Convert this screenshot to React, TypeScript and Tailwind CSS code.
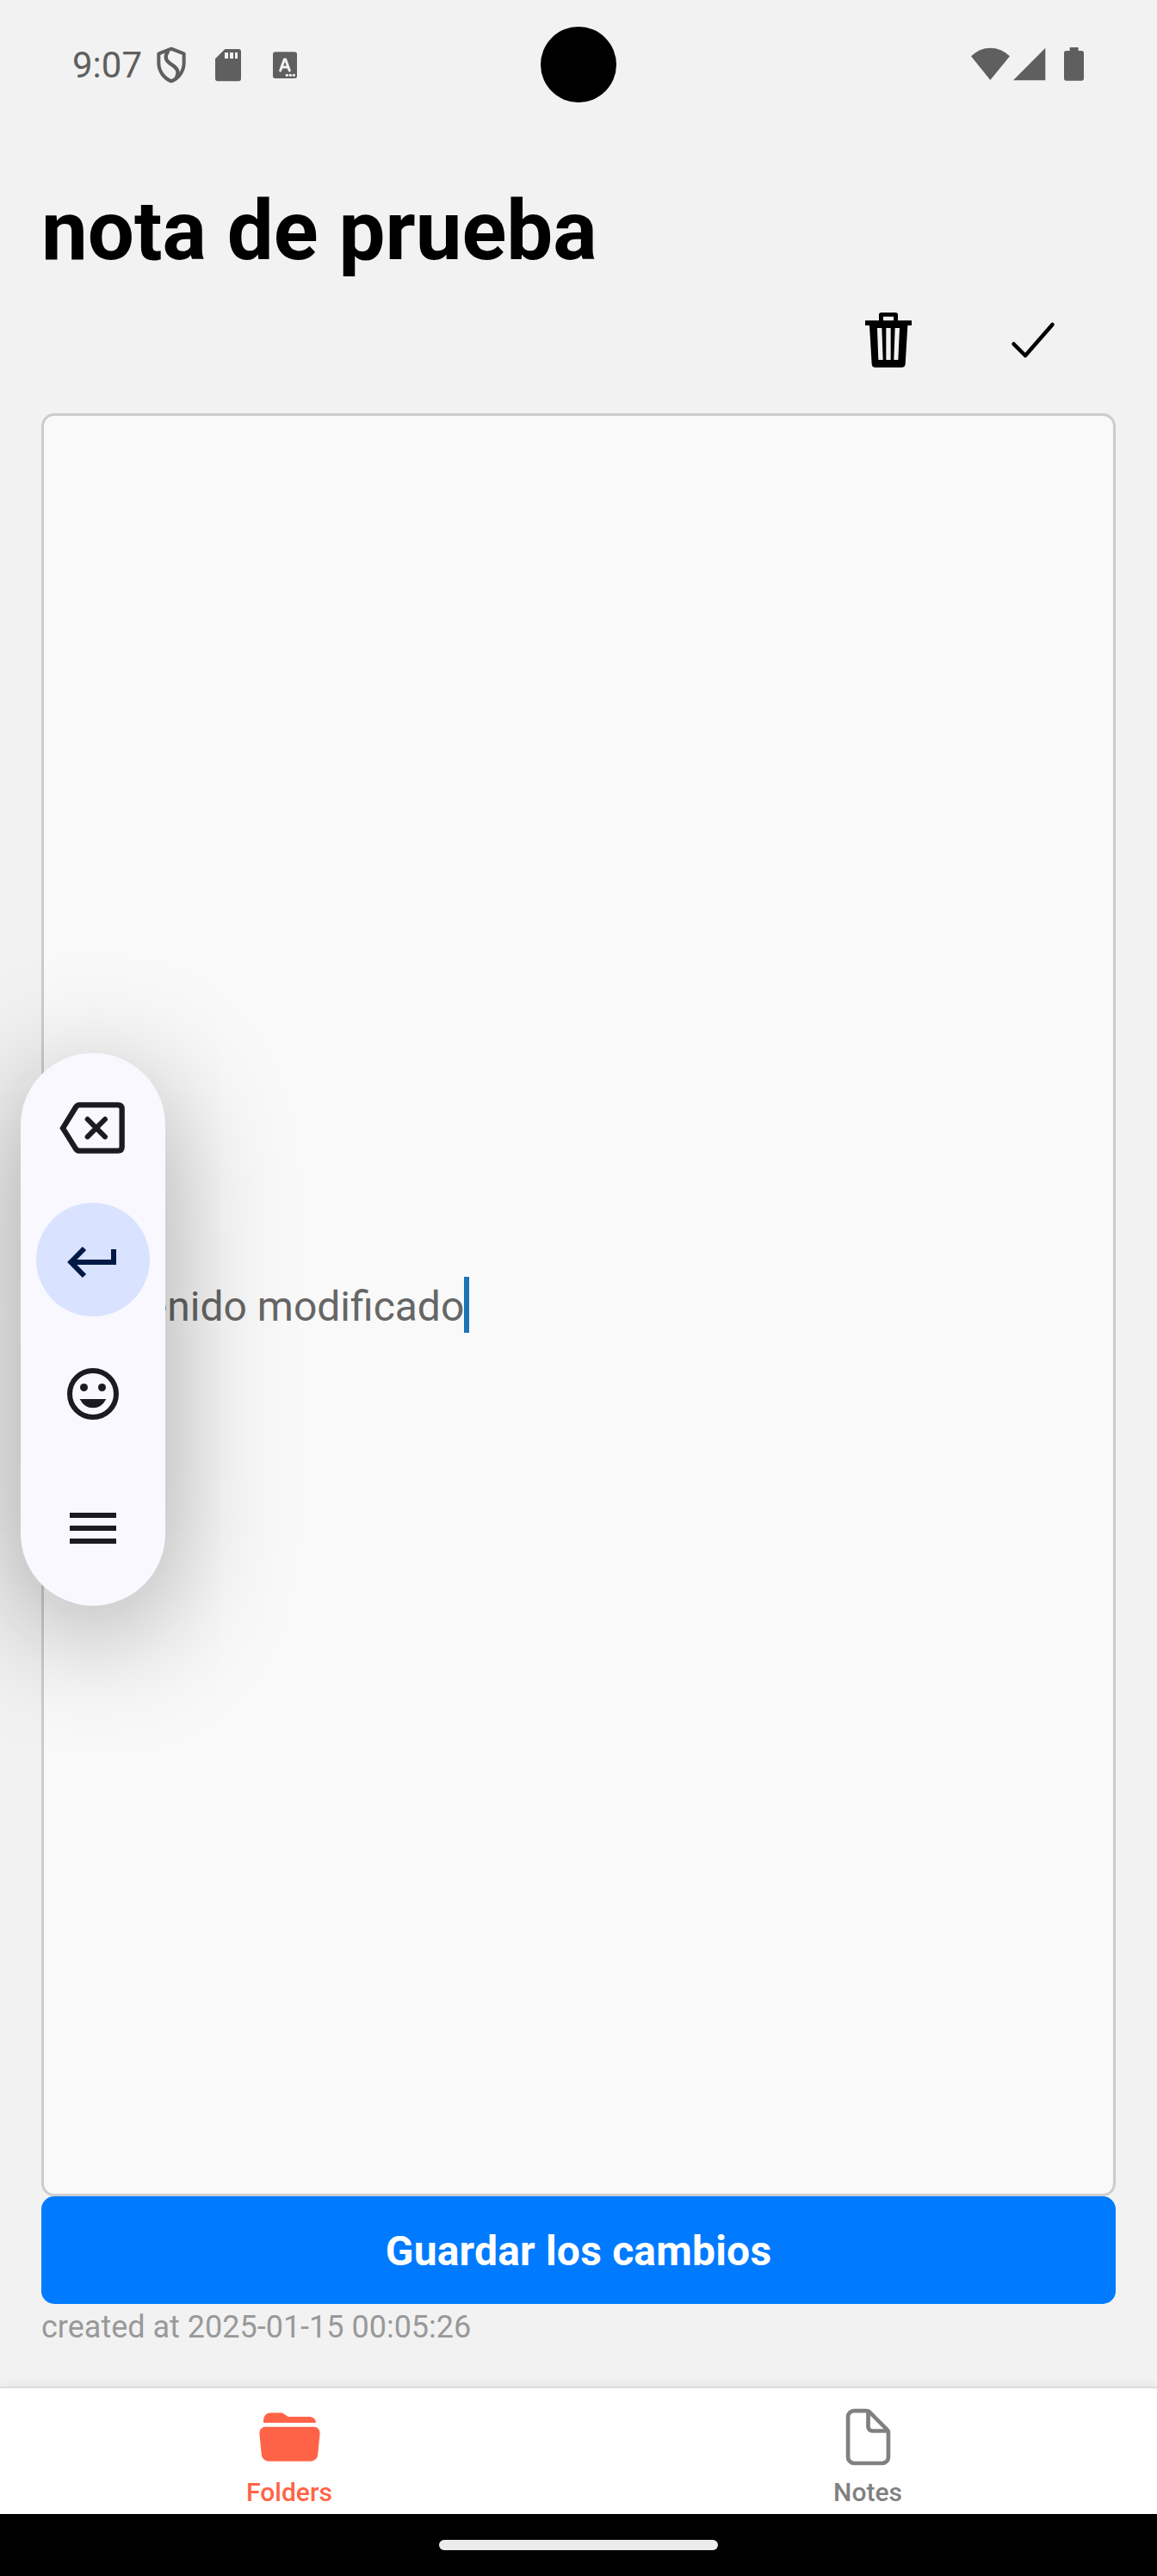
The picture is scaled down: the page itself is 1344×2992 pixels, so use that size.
import { IoCheckmarkOutline, IoDocumentOutline, IoFolderOpen } from "react-icons/io5";

function StatusBar() {
  return (
    <header className="relative flex h-[150px] shrink-0 items-center justify-between pl-[84px] text-[#5f5f5f]">
      <div className="flex items-center">
        <span className="w-[96px] pt-[2px] text-[42px] leading-[48px]">9:07</span>
        <svg className="h-[48px] w-[174px]" viewBox="360 93 522 144">
          <path
            d="M417 110 L461 127 V158 C461 188 443 213 417 223 C391 213 373 188 373 158 V127 Z"
            fill="none"
            stroke="currentColor"
            strokeWidth="12"
            strokeLinejoin="round"
          />
          <path
            d="M407 116 C390 140 400 153 415 163 C438 177 446 190 434 211"
            fill="none"
            stroke="currentColor"
            strokeWidth="13"
          />
          <path
            fill="currentColor"
            fillRule="evenodd"
            d="M604 111 H651 Q660 111 660 120 V214 Q660 223 651 223 H579 Q570 223 570 214 V145 Z M603 123 V144 H615 V123 Z M621 123 V144 H633 V123 Z M639 123 V144 H648 V123 Z"
          />
          <rect x="771" y="121" width="84" height="92" rx="8" fill="currentColor" />
          <path
            d="M797 186 L811 147 H815 L829 186 M803 174 H823"
            fill="none"
            stroke="#f2f2f2"
            strokeWidth="9"
            strokeLinecap="round"
            strokeLinejoin="round"
          />
          <g fill="#f2f2f2">
            <circle cx="820" cy="202" r="5" />
            <circle cx="832" cy="202" r="5" />
            <circle cx="844" cy="202" r="5" />
          </g>
        </svg>
      </div>
      <div className="absolute top-[31px] left-[628px] h-[88px] w-[88px] rounded-full bg-black" />
      <svg className="mr-[81px] h-[48px] w-[138px]" viewBox="78 93 414 144" fill="currentColor">
        <path d="M87 136 Q116 107 154 107 Q193 107 222 136 L154 219 Z" />
        <path d="M346 107 V220 H234 Z" />
        <path d="M431 105 H461 V117 H472 Q480 117 480 125 V213 Q480 221 472 221 H419 Q411 221 411 213 V125 Q411 117 419 117 H431 Z" />
      </svg>
    </header>
  );
}

function TrashIcon() {
  return (
    <svg className="h-[72px] w-[72px]" viewBox="108 87 216 216" fill="currentColor">
      <path
        fillRule="evenodd"
        d="M183 127 V107 Q183 99 191 99 H241 Q249 99 249 107 V127 H297 V144 H283 L275 278 Q274 290 262 290 H170 Q159 290 158 278 L150 144 H135 V127 Z M198 113 V127 H234 V113 Z M177 153 L181 264 H197 L193 153 Z M208 153 V264 H224 V153 Z M239 153 L235 264 H250 L255 153 Z"
      />
    </svg>
  );
}

function KeyboardPill() {
  return (
    <div className="absolute top-[1223px] left-[24px] flex h-[642px] w-[168px] flex-col items-center rounded-[84px] bg-[#f9f8ff] pt-[21px] text-[#1b1b21] shadow-[0_30px_140px_rgba(0,0,0,0.34)]">
      <button className="mb-[21px]">
        <svg className="h-[132px] w-[132px]" viewBox="126 132 396 396" fill="none" stroke="currentColor">
          <path
            d="M219 331 L264 258 Q269 250 277 250 H411 Q425 250 425 264 V396 Q425 410 411 410 H277 Q269 410 264 403 Z"
            strokeWidth="19"
          />
          <path d="M305 300 L366 361 M366 300 L305 361" strokeWidth="18" strokeLinecap="round" />
        </svg>
      </button>
      <button className="mb-[24px] rounded-full bg-[#d9e2ff] text-[#001945]">
        <svg className="h-[132px] w-[132px]" viewBox="126 591 396 396" fill="none" stroke="currentColor" strokeWidth="18">
          <path d="M396 753 V798 H252 M294 750 L247 798 L294 846" />
        </svg>
      </button>
      <button className="mb-[24px]">
        <svg className="h-[132px] w-[132px]" viewBox="126 39 396 396" fill="currentColor">
          <circle cx="324" cy="237" r="81" fill="none" stroke="currentColor" strokeWidth="18" />
          <circle cx="292.500" cy="214.500" r="13.500" />
          <circle cx="355.500" cy="214.500" r="13.500" />
          <path d="M278 255 H370 Q354 286 324 286 Q294 286 278 255 Z" />
        </svg>
      </button>
      <button>
        <svg className="h-[132px] w-[132px]" viewBox="126 507 396 396" fill="currentColor">
          <path d="M243 651 H405 V669 H243 Z M243 696 H405 V714 H243 Z M243 741 H405 V759 H243 Z" />
        </svg>
      </button>
    </div>
  );
}

function TabBar() {
  return (
    <nav className="flex h-[148px] shrink-0 border-t-2 border-[#dedede] bg-white text-[30px] leading-[36px] font-medium shadow-[0_-2px_12px_rgba(0,0,0,0.06)]">
      <a className="flex flex-1 flex-col items-center pt-[19px] text-[#ff6347]">
        <IoFolderOpen className="h-[75px] w-[75px]" />
        <span className="mt-[9px]">Folders</span>
      </a>
      <a className="flex flex-1 flex-col items-center pt-[19px] text-[#808080]">
        <IoDocumentOutline className="h-[75px] w-[75px]" />
        <span className="mt-[9px]">Notes</span>
      </a>
    </nav>
  );
}

export default function App() {
  return (
    <div className="relative flex h-[2992px] w-[1344px] flex-col overflow-hidden bg-[#f2f2f2] font-['Roboto',sans-serif]">
      <StatusBar />
      <main className="flex flex-1 flex-col px-[48px] pt-[62px]">
        <h1 className="h-[112px] text-[96px] leading-[112px] font-bold text-black">nota de prueba</h1>
        <div className="mt-[35px] flex justify-end gap-[96px] pr-[60px] text-black">
          <button>
            <TrashIcon />
          </button>
          <button>
            <IoCheckmarkOutline className="h-[72px] w-[72px]" />
          </button>
        </div>
        <div className="mt-[49px] flex h-[2071px] items-center rounded-[15px] border-[3px] border-[#cccccc] bg-[#f9f9f9] pl-[17px]">
          <span className="pt-[4px] text-[48px] leading-[56px] text-[#666666]">Contenido modificado</span>
          <span className="h-[65px] w-[6px] bg-[#1b73b8]" />
        </div>
        <button className="h-[125px] rounded-[15px] bg-[#007bff] pt-[3px] text-[48px] leading-[56px] font-bold tracking-[0.2px] text-white">
          Guardar los cambios
        </button>
        <p className="mt-[5px] text-[36px] leading-[44px] text-[#999999]">created at 2025-01-15 00:05:26</p>
      </main>
      <TabBar />
      <footer className="flex h-[72px] shrink-0 items-center justify-center bg-black">
        <div className="h-[12px] w-[324px] rounded-full bg-[#ebebeb]" />
      </footer>
      <KeyboardPill />
    </div>
  );
}
